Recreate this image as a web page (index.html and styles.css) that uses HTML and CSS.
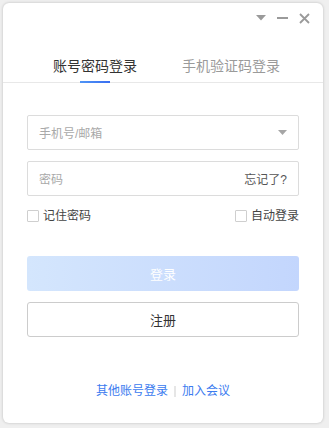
FILE: index.html
```
<!DOCTYPE html>
<html lang="zh-CN">
<head>
<meta charset="utf-8">
<link rel="stylesheet" href="styles.css">
</head>
<body>
<div class="win">
  <div class="titlebar">
    <span class="tb-icon"><svg width="10" height="6" viewBox="0 0 10 6"><path d="M0 0H10L5 5.5Z" fill="#9a9a9a"/></svg></span>
    <span class="tb-icon"><svg width="11" height="2" viewBox="0 0 11 2"><rect width="11" height="2" fill="#9a9a9a"/></svg></span>
    <span class="tb-icon"><svg width="11" height="11" viewBox="0 0 11 11"><path d="M1 1L10 10M10 1L1 10" stroke="#9a9a9a" stroke-width="1.8"/></svg></span>
  </div>
  <div class="tabs">
    <div class="tab active">账号密码登录</div>
    <div class="tab">手机验证码登录</div>
  </div>
  <div class="form">
    <div class="field">
      <span class="ph">手机号/邮箱</span>
      <svg class="caret" width="9" height="5" viewBox="0 0 9 5"><path d="M0 0H9L4.5 5Z" fill="#a6a6a6"/></svg>
    </div>
    <div class="field field2">
      <span class="ph">密码</span>
      <span class="forgot">忘记了?</span>
    </div>
    <div class="opts">
      <label class="chk"><span class="box"></span>记住密码</label>
      <label class="chk"><span class="box"></span>自动登录</label>
    </div>
    <div class="btn primary">登录</div>
    <div class="btn secondary">注册</div>
  </div>
  <div class="footer">
    <span class="link">其他账号登录</span>
    <span class="sep"></span>
    <span class="link">加入会议</span>
  </div>
</div>
</body>
</html>
```
FILE: styles.css
```
* { box-sizing: border-box; }
html, body { margin: 0; }
body {
  width: 329px;
  height: 428px;
  padding: 3px;
  background: #efefef;
  font-family: "Liberation Sans", "Noto Sans CJK SC", sans-serif;
  overflow: hidden;
}
.win {
  width: 320px;
  height: 420px;
  background: #fff;
  border-radius: 6px;
  box-shadow: 0 0 3px rgba(0,0,0,0.22);
  display: flex;
  flex-direction: column;
}
.titlebar {
  height: 30px;
  display: flex;
  justify-content: flex-end;
  align-items: center;
  padding-right: 8px;
  gap: 1px;
}
.tb-icon {
  width: 21px;
  height: 20px;
  display: flex;
  align-items: center;
  justify-content: center;
}
.tabs {
  margin-top: 23px;
  display: flex;
  padding: 0 24px;
  border-bottom: 1px solid #e8e8e8;
}
.tab {
  flex: 1;
  display: flex;
  flex-direction: column;
  align-items: center;
  font-size: 14px;
  line-height: 20px;
  color: #9a9a9a;
}
.tab::after {
  content: "";
  display: block;
  width: 30px;
  height: 2px;
  margin: 5px 0 -1px;
}
.tab.active { color: #333; }
.tab.active::after {
  background: linear-gradient(90deg, #4f95f6, #3a6ef0);
}
.form {
  padding: 0 24px;
  margin-top: 32px;
  display: flex;
  flex-direction: column;
}
.field {
  height: 35px;
  border: 1px solid #dcdcdc;
  border-radius: 2px;
  display: flex;
  align-items: center;
  justify-content: space-between;
  padding: 0 11px 0 11px;
  font-size: 12px;
}
.field2 { margin-top: 11px; }
.ph { color: #a9a9a9; }
.caret { margin-right: 0; }
.forgot { color: #555; }
.opts {
  margin-top: 13px;
  height: 14px;
  display: flex;
  justify-content: space-between;
  align-items: center;
  font-size: 12px;
  color: #444;
}
.chk {
  display: flex;
  align-items: center;
  gap: 4px;
  line-height: 14px;
}
.box {
  width: 12px;
  height: 12px;
  border: 1px solid #cfcfcf;
  border-radius: 1px;
  background: #fff;
}
.btn {
  height: 35px;
  border-radius: 3px;
  display: flex;
  align-items: center;
  justify-content: center;
  font-size: 13px;
}
.primary {
  margin-top: 33px;
  background: linear-gradient(90deg, #d4e6fd, #c3d6fd);
  color: #fff;
}
.secondary {
  margin-top: 11px;
  border: 1px solid #cccccc;
  color: #333;
}
.footer {
  margin-top: 46px;
  display: flex;
  justify-content: center;
  align-items: center;
  gap: 6px;
  font-size: 12px;
  line-height: 16px;
}
.link { color: #3b7bef; }
.sep {
  width: 2px;
  height: 11px;
  background: #e6e6e6;
}
```
